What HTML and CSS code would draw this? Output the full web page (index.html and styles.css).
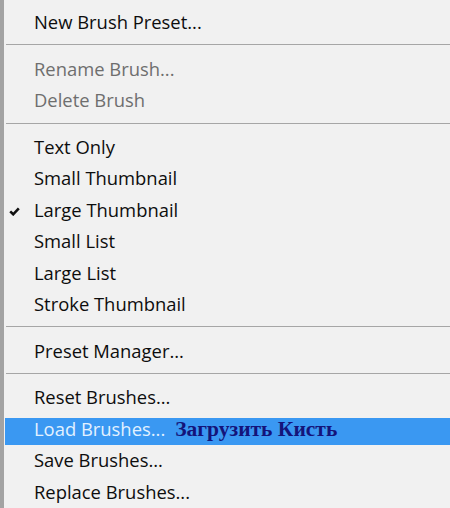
FILE: index.html
```html
<!DOCTYPE html>
<html lang="en">
<head>
  <meta charset="UTF-8">
  <title>Brush Presets Menu</title>
  <link rel="stylesheet" href="styles.css">
</head>
<body>
  <div class="menu">
    <div class="item"><span class="check"></span>New Brush Preset...</div>
    <div class="sep"></div>
    <div class="item disabled"><span class="check"></span>Rename Brush...</div>
    <div class="item disabled"><span class="check"></span>Delete Brush</div>
    <div class="sep"></div>
    <div class="item"><span class="check"></span>Text Only</div>
    <div class="item"><span class="check"></span>Small Thumbnail</div>
    <div class="item">
      <span class="check">
        <svg width="11" height="9" viewBox="0 0 11 9"><path d="M1.2 4.4 L4.2 7.3 L9.8 1.4" fill="none" stroke="#111" stroke-width="2.6"/></svg>
      </span>Large Thumbnail
    </div>
    <div class="item"><span class="check"></span>Small List</div>
    <div class="item"><span class="check"></span>Large List</div>
    <div class="item"><span class="check"></span>Stroke Thumbnail</div>
    <div class="sep"></div>
    <div class="item"><span class="check"></span>Preset Manager...</div>
    <div class="sep"></div>
    <div class="item"><span class="check"></span>Reset Brushes...</div>
    <div class="item active"><span class="check"></span>Load Brushes... <span class="note">Загрузить Кисть</span></div>
    <div class="item"><span class="check"></span>Save Brushes...</div>
    <div class="item"><span class="check"></span>Replace Brushes...</div>
  </div>
</body>
</html>
```
FILE: styles.css
```css
body {
  margin: 0;
  padding: 0;
  background: #f0f0f0;
  font-family: 'Open Sans', 'Noto Sans', sans-serif;
  overflow: hidden;
}

.menu {
  display: flex;
  flex-direction: column;
  gap: 4.4px;
  height: 508px;
  box-sizing: border-box;
  padding-top: 11px;
  border-left: 4px solid #a3a3a3;
  background: #f1f1f1;
}

.item {
  display: flex;
  align-items: baseline;
  height: 27px;
  box-sizing: border-box;
  margin-left: 1px;
  padding-bottom: 5px;
  font-size: 18.4px;
  font-weight: 500;
  line-height: 22px;
  color: #0d0d0d;
  white-space: nowrap;
}

.check {
  display: inline-flex;
  align-items: center;
  justify-content: flex-start;
  width: 25px;
  padding-left: 4px;
  align-self: center;
  padding-top: 3px;
}

.disabled {
  color: #6e6e6e;
}

.active {
  background: #3a98f2;
  color: #e2f1ff;
}

.note {
  margin-left: 10px;
  font-family: 'Liberation Serif', serif;
  font-weight: bold;
  font-size: 21.5px;
  color: #14147a;
}

.sep {
  height: 1px;
  margin: 2px 0 8px 2px;
  background: #a6a6a6;
  flex-shrink: 0;
}
```
